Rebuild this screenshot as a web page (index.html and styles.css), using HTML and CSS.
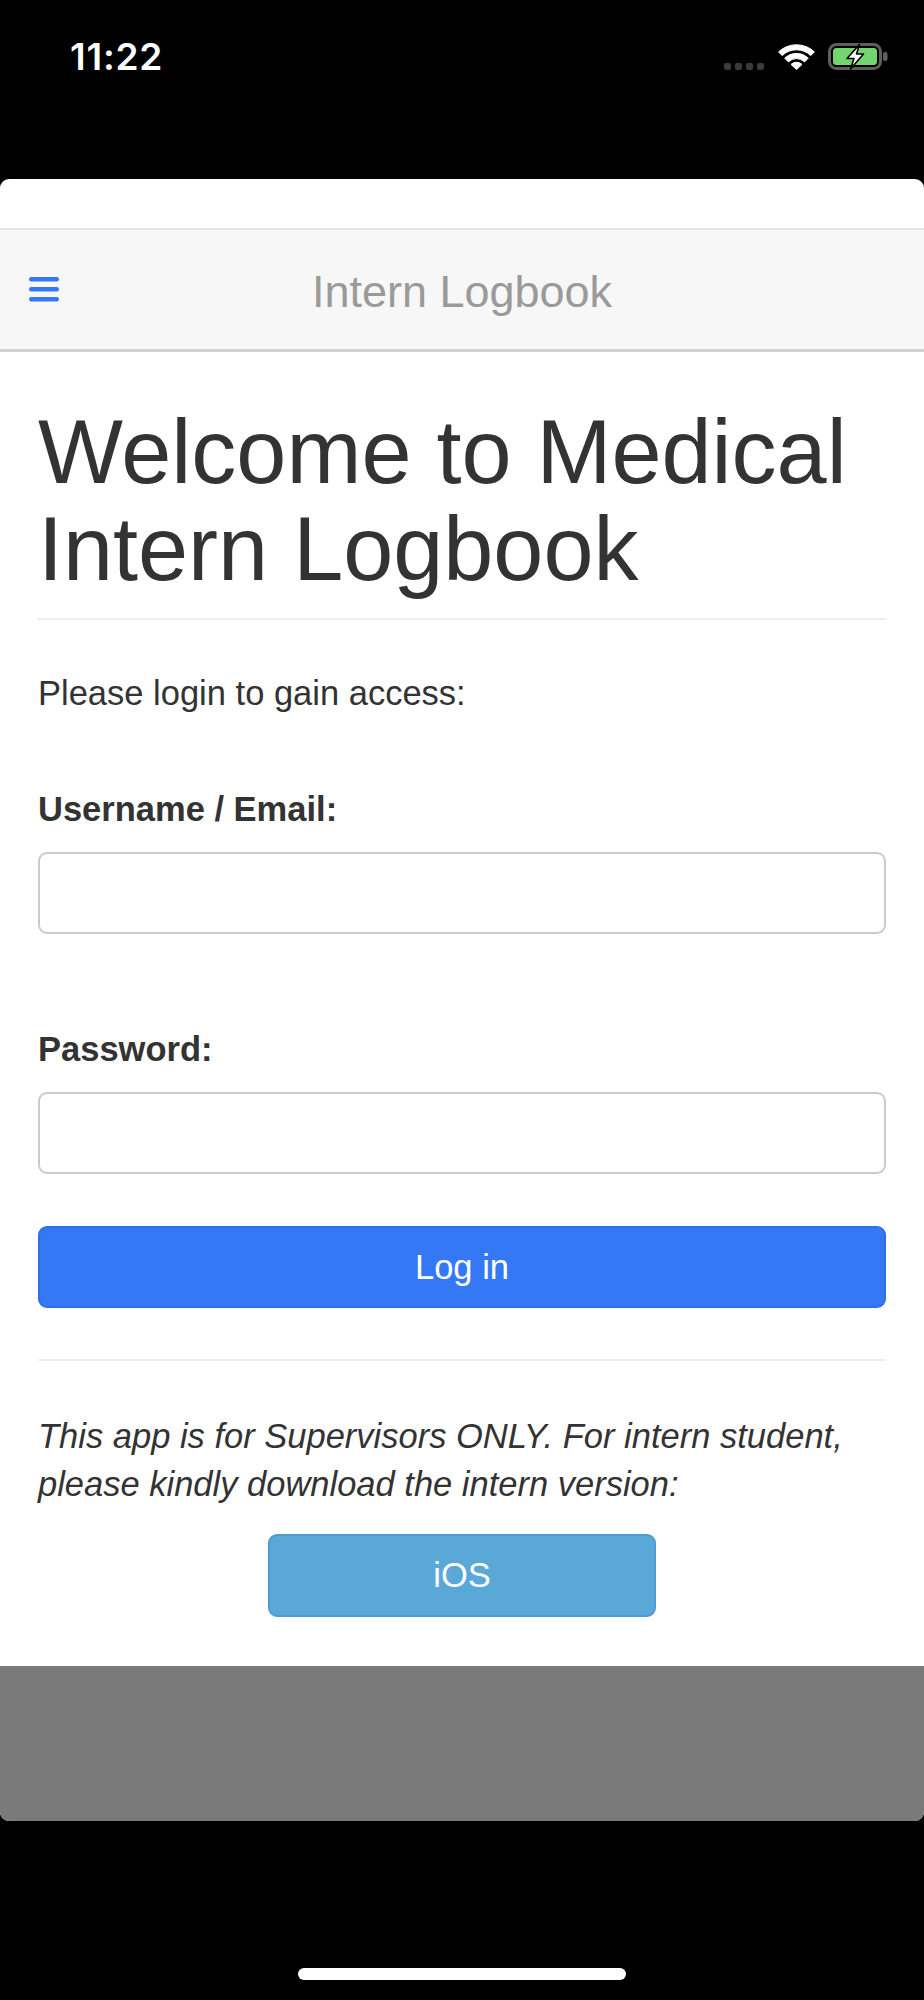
FILE: index.html
```html
<!DOCTYPE html>
<html lang="en">
<head>
<meta charset="utf-8">
<title>Intern Logbook</title>
<link rel="stylesheet" href="styles.css">
</head>
<body>
<div class="phone">
  <header class="status">
    <span class="time">11:22</span>
    <div class="status-icons">
      <div class="signal"><i></i><i></i><i></i><i></i></div>
      <svg class="wifi" width="37" height="27" viewBox="0 0 37 27">
        <g fill="#fff" stroke="#fff" stroke-width="1" stroke-linejoin="round">
          <path d="M0.6 8.9 A26 26 0 0 1 36.4 8.9 L32.8 12.6 A20.5 20.5 0 0 0 4.2 12.6 Z"/>
          <path d="M6.7 15.1 A17 17 0 0 1 30.3 15.1 L26.6 18.9 A11.5 11.5 0 0 0 10.4 18.9 Z"/>
          <path d="M13 21.4 A8 8 0 0 1 24 21.4 L18.5 26.5 Z"/>
        </g>
      </svg>
      <svg class="battery" width="61" height="27" viewBox="0 0 61 27">
        <rect x="1.5" y="1.5" width="51" height="24" rx="7" fill="none" stroke="#5e5e5e" stroke-width="3"/>
        <rect x="5" y="5" width="44" height="17" rx="3.5" fill="#72d56e"/>
        <rect x="55" y="9" width="4.5" height="9" rx="2" fill="#5e5e5e"/>
        <path d="M31.5 1.5 L19 15.5 H26 L22.5 26 L35.5 11 H28.5 L31.5 1.5 Z" fill="#fff" stroke="#000" stroke-width="1.6" stroke-linejoin="round"/>
      </svg>
    </div>
  </header>

  <div class="sheet">
    <div class="sheet-gap"></div>
    <nav class="navbar">
      <button class="menu" aria-label="Menu">
        <svg width="30" height="25" viewBox="0 0 30 25">
          <rect x="0" y="0" width="30" height="4.6" rx="2.3" fill="#3478f6"/>
          <rect x="0" y="10" width="30" height="4.6" rx="2.3" fill="#3478f6"/>
          <rect x="0" y="20" width="30" height="4.6" rx="2.3" fill="#3478f6"/>
        </svg>
      </button>
      <span class="brand">Intern Logbook</span>
      <span class="nav-spacer"></span>
    </nav>

    <main class="content">
      <h1 class="page-title">Welcome to Medical Intern Logbook</h1>
      <p class="intro">Please login to gain access:</p>

      <form class="login">
        <label class="field-label label-first" for="user">Username / Email:</label>
        <input class="field" id="user" type="text">
        <label class="field-label label-second" for="pass">Password:</label>
        <input class="field" id="pass" type="password">
        <button class="btn-login" type="button">Log in</button>
      </form>

      <hr class="divider">

      <p class="note">This app is for Supervisors ONLY. For intern student, please kindly download the intern version:</p>
      <div class="store">
        <button class="btn-ios" type="button">iOS</button>
      </div>
    </main>

    <div class="sheet-footer"></div>
  </div>

  <div class="home-area">
    <div class="home-indicator"></div>
  </div>
</div>
</body>
</html>
```

FILE: styles.css
```css
* {
  box-sizing: border-box;
}

html, body {
  margin: 0;
  padding: 0;
  background: #000;
}

body {
  font-family: "Liberation Sans", Arial, sans-serif;
  color: #333;
}

.phone {
  width: 924px;
  height: 2000px;
  display: flex;
  flex-direction: column;
  background: #000;
}

/* ---------- status bar ---------- */
.status {
  height: 179px;
  display: flex;
  justify-content: space-between;
  align-items: flex-start;
  padding: 0 35px 0 70px;
}

.time {
  margin-top: 38px;
  font-family: "Inter", "Liberation Sans", sans-serif;
  font-weight: 600;
  font-size: 37px;
  line-height: 37px;
  color: #fff;
  letter-spacing: 0.8px;
}

.status-icons {
  margin-top: 43px;
  height: 27px;
  display: flex;
  align-items: flex-end;
}

.signal {
  display: flex;
  gap: 4px;
  margin-right: 14px;
}

.signal i {
  display: block;
  width: 7px;
  height: 7px;
  border-radius: 2px;
  background: #3b3b3b;
}

.wifi {
  display: block;
  margin-right: 13px;
}

.battery {
  display: block;
}

/* ---------- sheet ---------- */
.sheet {
  background: #fff;
  border-radius: 9px;
  overflow: hidden;
  display: flex;
  flex-direction: column;
}

.sheet-gap {
  height: 49px;
}

.navbar {
  height: 124px;
  background: #f7f7f7;
  border-top: 2px solid #e6e6e6;
  border-bottom: 3px solid #d2d2d2;
  display: grid;
  grid-template-columns: 1fr auto 1fr;
  align-items: center;
}

.menu {
  justify-self: start;
  margin-left: 29px;
  padding: 0;
  border: 0;
  background: none;
  display: flex;
}

.brand {
  font-size: 45px;
  line-height: 45px;
  color: #9a9a9a;
  padding-top: 4px;
}

.content {
  padding: 0 38px 49px;
}

.page-title {
  margin: 52px 0 0;
  font-size: 90px;
  line-height: 97px;
  font-weight: 400;
  color: #333;
  padding-bottom: 20px;
  border-bottom: 2px solid #eee;
}

.intro {
  margin: 49px 0 0;
  font-size: 34.5px;
  line-height: 49px;
}

.login {
  display: flex;
  flex-direction: column;
}

.field-label {
  font-size: 34.5px;
  line-height: 49px;
  font-weight: 700;
}

.label-first {
  margin-top: 67px;
}

.label-second {
  margin-top: 91px;
}

.field {
  margin-top: 18px;
  height: 82px;
  width: 100%;
  border: 2px solid #cbcbcb;
  border-radius: 9px;
  background: #fff;
  font-family: inherit;
  font-size: 34.5px;
  padding: 0 30px;
}

.btn-login {
  margin-top: 52px;
  height: 82px;
  width: 100%;
  border: 2px solid #2f6fe6;
  border-radius: 9px;
  background: #3478f6;
  color: #fff;
  font-family: inherit;
  font-size: 34.5px;
  line-height: 49px;
  padding: 0;
}

.divider {
  margin: 51px 0 0;
  border: 0;
  border-top: 2px solid #eee;
  height: 0;
}

.note {
  margin: 51px 0 0;
  font-size: 34.5px;
  line-height: 48px;
  font-style: italic;
}

.store {
  display: flex;
  justify-content: center;
  margin-top: 26px;
}

.btn-ios {
  width: 388px;
  height: 83px;
  border: 2px solid #4d9dd2;
  border-radius: 9px;
  background: #5aa8d8;
  color: #fff;
  font-family: inherit;
  font-size: 34.5px;
  padding: 0;
}

.sheet-footer {
  height: 155px;
  background: #7a7a7a;
}

/* ---------- home indicator ---------- */
.home-area {
  flex: 1;
  display: flex;
  justify-content: center;
  padding-top: 147px;
}

.home-indicator {
  width: 328px;
  height: 12px;
  border-radius: 6px;
  background: #fff;
}
```
